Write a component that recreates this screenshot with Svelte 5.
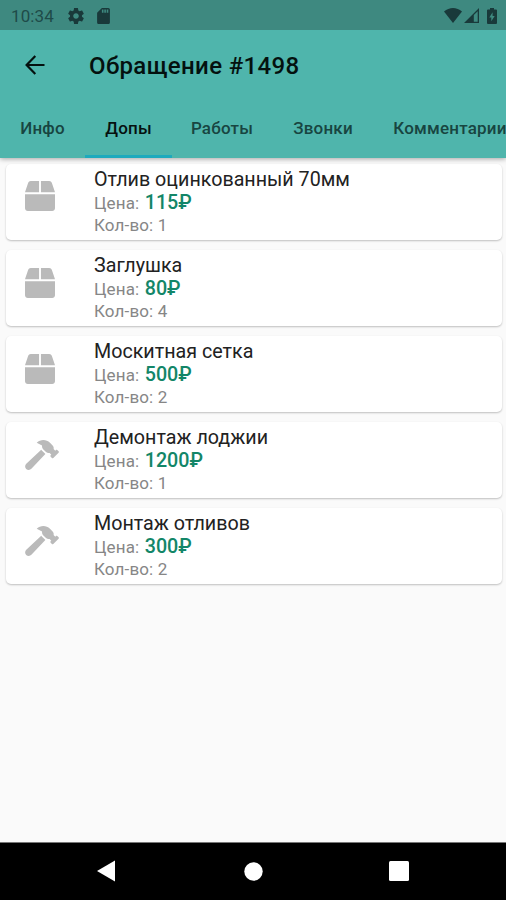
<script>
  const tabs = [
    { label: 'Инфо', width: 85 },
    { label: 'Допы', width: 87, active: true },
    { label: 'Работы', width: 100 },
    { label: 'Звонки', width: 102 },
    { label: 'Комментарии', width: 152 }
  ];

  const items = [
    { name: 'Отлив оцинкованный 70мм', price: 115, count: 1, icon: 'box' },
    { name: 'Заглушка', price: 80, count: 4, icon: 'box' },
    { name: 'Москитная сетка', price: 500, count: 2, icon: 'box' },
    { name: 'Демонтаж лоджии', price: 1200, count: 1, icon: 'hammer' },
    { name: 'Монтаж отливов', price: 300, count: 2, icon: 'hammer' }
  ];
</script>

<div class="screen">
  <header>
    <div class="status">
      <span class="time">10:34</span>
      <svg class="gear" viewBox="2 2 20 20" width="16" height="16"><path d="M19.43 12.98c.04-.32.07-.64.07-.98s-.03-.66-.07-.98l2.11-1.65c.19-.15.24-.42.12-.64l-2-3.46c-.12-.22-.39-.3-.61-.22l-2.49 1c-.52-.4-1.08-.73-1.69-.98l-.38-2.65C14.46 2.18 14.25 2 14 2h-4c-.25 0-.46.18-.49.42l-.38 2.65c-.61.25-1.17.59-1.69.98l-2.49-1c-.23-.09-.49 0-.61.22l-2 3.46c-.13.22-.07.49.12.64l2.11 1.65c-.04.32-.07.65-.07.98s.03.66.07.98l-2.11 1.65c-.19.15-.24.42-.12.64l2 3.46c.12.22.39.3.61.22l2.49-1c.52.4 1.08.73 1.69.98l.38 2.65c.03.24.24.42.49.42h4c.25 0 .46-.18.49-.42l.38-2.65c.61-.25 1.17-.59 1.69-.98l2.49 1c.23.09.49 0 .61-.22l2-3.46c.12-.22.07-.49-.12-.64l-2.11-1.65zM12 15.5c-1.93 0-3.5-1.57-3.5-3.5s1.57-3.5 3.5-3.5 3.5 1.57 3.5 3.5-1.57 3.5-3.5 3.5z"/></svg>
      <svg viewBox="4 2 16 20" width="13" height="16"><path d="M18 2h-8L4.02 8 4 20c0 1.1.9 2 2 2h12c1.1 0 2-.9 2-2V4c0-1.1-.9-2-2-2zm-6 6h-2V4h2v4zm3 0h-2V4h2v4zm3 0h-2V4h2v4z"/></svg>
      <span class="fill"></span>
      <svg width="18" height="15" viewBox="0 0 18 15"><path d="M0 3.6C5.2-1.2 12.8-1.2 18 3.6L9 15z"/></svg>
      <svg class="signal" width="15" height="15" viewBox="0 0 15 15"><path fill-rule="evenodd" d="M15 0v15H0zM13.700 3.200L9.800 7.100v6.600h3.900z"/></svg>
      <svg class="battery" width="10" height="16" viewBox="0 0 10 16"><path fill-rule="evenodd" d="M3 0h4v1.600h2q1 0 1 1V15q0 1-1 1H1q-1 0-1-1V2.600q0-1 1-1h2zM5.600 4.300L2.300 9.500h2v3.800l3.400-5.300H5.600z"/></svg>
    </div>
    <div class="toolbar">
      <svg width="20" height="20" viewBox="0 0 20 20" fill="none" stroke="#04110f" stroke-width="2.2"><path d="M19.500 10H2M10.300 1.100L1.600 10l8.700 8.900"/></svg>
      <h1>Обращение #1498</h1>
    </div>
    <nav>
      {#each tabs as tab}
        <div class="tab" class:active={tab.active} style:width="{tab.width}px">{tab.label}</div>
      {/each}
    </nav>
  </header>

  <main>
    {#each items as item}
      <article>
        <div class="icon">
          {#if item.icon === 'box'}
            <svg width="30" height="30" viewBox="0 0 512 512"><path d="M509.500 184.600L458.900 32.800C452.400 13.200 434.100 0 413.400 0H272v192h238.700c-.4-2.500-.4-5-1.200-7.400zM240 0H98.600c-20.700 0-39 13.200-45.500 32.800L2.500 184.600c-.8 2.400-.8 4.900-1.200 7.400H240V0zM0 224v240c0 26.500 21.500 48 48 48h416c26.500 0 48-21.500 48-48V224H0z"/></svg>
          {:else}
            <svg width="34" height="30" viewBox="0 0 576 512"><path d="M571.310 193.940l-22.630-22.630c-6.250-6.250-16.380-6.250-22.630 0l-11.310 11.310-28.900-28.900c5.630-21.310.36-44.900-16.350-61.610l-45.250-45.250c-62.480-62.480-163.790-62.480-226.280 0l90.510 45.250v18.750c0 16.970 6.740 33.250 18.750 45.250l49.140 49.140c16.710 16.710 40.300 21.980 61.610 16.350l28.900 28.900-11.310 11.310c-6.250 6.250-6.250 16.380 0 22.630l22.630 22.630c6.250 6.250 16.380 6.250 22.630 0l90.510-90.510c6.230-6.240 6.230-16.370-.02-22.620zm-286.720-15.200c-3.700-3.700-6.840-7.790-9.850-11.950L19.640 404.960c-25.570 23.880-26.260 64.190-1.530 88.930s65.050 24.050 88.920-1.530l238.130-255.070c-3.960-2.910-7.900-5.870-11.440-9.410l-49.140-49.140z"/></svg>
          {/if}
        </div>
        <div class="info">
          <div class="name">{item.name}</div>
          <div class="line">Цена: <b>{item.price}₽</b></div>
          <div class="line">Кол-во: {item.count}</div>
        </div>
      </article>
    {/each}
  </main>

  <footer>
    <svg width="18" height="22" viewBox="0 0 18 22"><path d="M0 11L18 .5v21z"/></svg>
    <svg class="home" width="19" height="19" viewBox="0 0 19 19"><circle cx="9.500" cy="9.500" r="9.200"/></svg>
    <svg width="20" height="20" viewBox="0 0 20 20"><rect width="20" height="20" rx="1.500"/></svg>
  </footer>
</div>

<style>
  :global(body) {
    margin: 0;
  }

  .screen {
    width: 506px;
    height: 900px;
    overflow: hidden;
    display: flex;
    flex-direction: column;
    background: #fafafa;
    font-family: Roboto, "Noto Sans", sans-serif;
  }

  header {
    position: relative;
    flex: none;
    height: 158px;
    background: #4fb5ac;
    box-shadow: 0 1px 5px rgba(0, 0, 0, 0.35);
  }

  .status {
    height: 30px;
    box-sizing: border-box;
    display: flex;
    align-items: center;
    padding: 1px 9px 0 11px;
    background: #3e8980;
    fill: #19393a;
  }

  .time {
    width: 57px;
    font-size: 17px;
    letter-spacing: 0.1px;
    color: #1e4b49;
  }

  .gear {
    margin-right: 13px;
  }

  .fill {
    flex: 1;
  }

  .signal {
    margin-left: 2px;
  }

  .battery {
    margin-left: 8px;
  }

  .toolbar {
    height: 70px;
    display: flex;
    align-items: center;
    padding-left: 25px;
  }

  h1 {
    margin: 0 0 0 44px;
    padding-top: 1px;
    font-size: 24px;
    line-height: 30px;
    font-weight: 500;
    letter-spacing: 0.35px;
    color: #04110f;
    white-space: nowrap;
  }

  nav {
    height: 58px;
    display: flex;
  }

  .tab {
    flex: none;
    box-sizing: border-box;
    height: 58px;
    padding-top: 1px;
    line-height: 54px;
    text-align: center;
    font-size: 17px;
    font-weight: 500;
    letter-spacing: 0.2px;
    color: #184541;
    white-space: nowrap;
  }

  .active {
    color: #06110f;
    border-bottom: 3px solid #1eaabd;
  }

  main {
    flex: 1;
    display: flex;
    flex-direction: column;
    gap: 10.2px;
    padding: 5.6px 4px 0 5.5px;
  }

  article {
    height: 76px;
    box-sizing: border-box;
    display: flex;
    border-radius: 5px;
    background: #fff;
    box-shadow: 0 1px 2px rgba(0, 0, 0, 0.24);
  }

  .icon {
    width: 88.5px;
    box-sizing: border-box;
    padding: 17.8px 0 0 19.5px;
    fill: #bababa;
  }

  .icon svg {
    display: block;
  }

  .info {
    padding-top: 4px;
    white-space: nowrap;
  }

  .name {
    font-size: 19.7px;
    line-height: 24px;
    color: #222;
  }

  .line {
    font-size: 17px;
    line-height: 22px;
    height: 22px;
    letter-spacing: 0.15px;
    color: #868686;
  }

  b {
    margin-left: 1px;
    font-size: 19.7px;
    line-height: 20px;
    font-weight: 500;
    letter-spacing: 0;
    color: #138668;
  }

  footer {
    flex: none;
    height: 58px;
    box-sizing: border-box;
    display: flex;
    align-items: center;
    justify-content: space-between;
    padding: 0 97px 1px;
    background: #000;
    border-top: 1px solid #777;
    fill: #fff;
  }

  .home {
    margin-left: 3px;
  }
</style>
